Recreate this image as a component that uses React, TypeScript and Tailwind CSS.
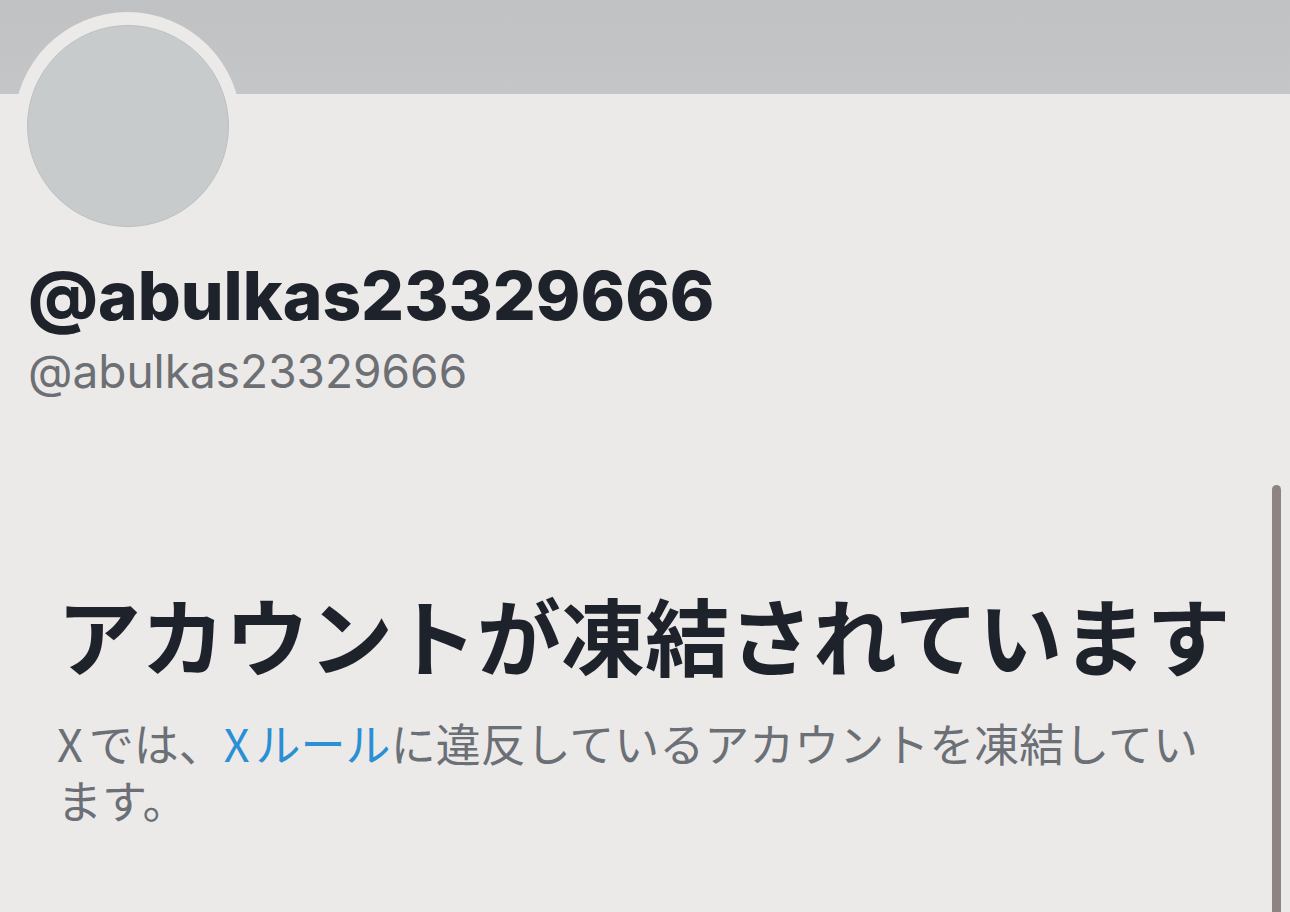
export default function App() {
  return (
    <div className="relative min-h-[912px] w-full overflow-hidden bg-[#eceae8] font-['Inter','Noto_Sans_CJK_JP',sans-serif]">
      {/* banner */}
      <div className="h-[94px] w-full bg-gradient-to-b from-[#c0c1c2] to-[#c5c6c7]" />

      {/* avatar */}
      <div className="-mt-[82px] ml-[14px] h-[227px] w-[227px] rounded-full bg-[#eceae8] p-[12.5px]">
        <div className="h-[202px] w-[202px] rounded-full border border-[#bdc0c1] bg-[#c8cbcc]" />
      </div>

      <div className="pl-[28px]">
        <div className="mt-[17px] text-[67.5px] font-extrabold leading-[80px] text-[#1e222b]">
          @abulkas23329666
        </div>
        <div className="mt-[9px] text-[46px] leading-[52px] text-[#6c7075]">
          @abulkas23329666
        </div>
      </div>

      <div className="mt-[195px] pl-[57px] font-['Noto_Sans_CJK_JP',sans-serif]">
        <h1 className="whitespace-nowrap text-[84px] font-bold leading-[84px] text-[#1e222b]">
          アカウントが凍結されています
        </h1>
        <p className="mt-[38px] w-[1160px] text-[45px] leading-[57px] text-[#6b6f76]">
          <span className="mr-[6px]">X</span>では、
          <span className="text-[#2a8fd4]">
            <span className="mr-[6px]">X</span>ルール
          </span>
          に違反しているアカウントを凍結しています。
        </p>
      </div>

      {/* scroll indicator */}
      <div className="absolute left-[1272px] top-[485px] h-[440px] w-[9px] rounded-full bg-[#8e8582]" />
    </div>
  );
}
